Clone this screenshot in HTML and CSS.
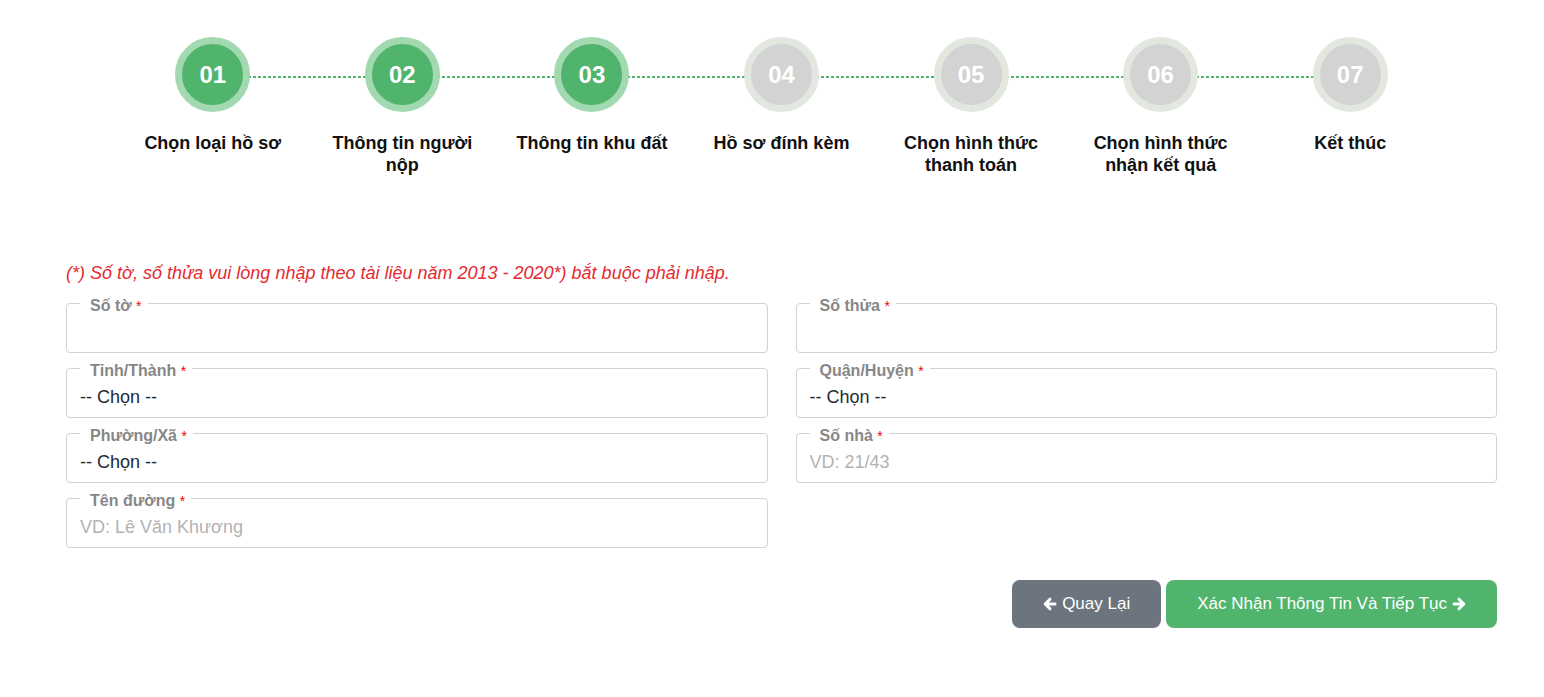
FILE: index.html
```html
<!DOCTYPE html>
<html lang="vi">
<head>
<meta charset="utf-8">
<title>Thông tin khu đất</title>
<link rel="stylesheet" href="styles.css">
</head>
<body>
<div class="page">
  <ol class="steps">
    <li class="step done"><span class="circle">01</span><span class="label">Chọn loại hồ sơ</span></li>
    <li class="step done"><span class="circle">02</span><span class="label">Thông tin người nộp</span></li>
    <li class="step done"><span class="circle">03</span><span class="label">Thông tin khu đất</span></li>
    <li class="step"><span class="circle">04</span><span class="label">Hồ sơ đính kèm</span></li>
    <li class="step"><span class="circle">05</span><span class="label">Chọn hình thức thanh toán</span></li>
    <li class="step"><span class="circle">06</span><span class="label">Chọn hình thức nhận kết quả</span></li>
    <li class="step"><span class="circle">07</span><span class="label">Kết thúc</span></li>
  </ol>

  <p class="note">(*) Số tờ, số thửa vui lòng nhập theo tài liệu năm 2013 - 2020*) bắt buộc phải nhập.</p>

  <form class="form">
    <fieldset class="field">
      <legend>Số tờ <span class="req">*</span></legend>
      <input class="control" type="text">
    </fieldset>
    <fieldset class="field">
      <legend>Số thửa <span class="req">*</span></legend>
      <input class="control" type="text">
    </fieldset>
    <fieldset class="field">
      <legend>Tỉnh/Thành <span class="req">*</span></legend>
      <select class="control"><option>-- Chọn --</option></select>
    </fieldset>
    <fieldset class="field">
      <legend>Quận/Huyện <span class="req">*</span></legend>
      <select class="control"><option>-- Chọn --</option></select>
    </fieldset>
    <fieldset class="field">
      <legend>Phường/Xã <span class="req">*</span></legend>
      <select class="control"><option>-- Chọn --</option></select>
    </fieldset>
    <fieldset class="field">
      <legend>Số nhà <span class="req">*</span></legend>
      <input class="control" type="text" placeholder="VD: 21/43">
    </fieldset>
    <fieldset class="field">
      <legend>Tên đường <span class="req">*</span></legend>
      <input class="control" type="text" placeholder="VD: Lê Văn Khương">
    </fieldset>
  </form>

  <div class="actions">
    <button class="btn btn-back" type="button">
      <svg class="ico" viewBox="0 0 14 14" aria-hidden="true"><path d="M7 2.2 L2.2 7 L7 11.8 M2.8 7 H12"/></svg>Quay Lại
    </button>
    <button class="btn btn-next" type="button">
      Xác Nhận Thông Tin Và Tiếp Tục<svg class="ico" viewBox="0 0 14 14" aria-hidden="true"><path d="M7 2.2 L11.8 7 L7 11.8 M11.2 7 H2"/></svg>
    </button>
  </div>
</div>
</body>
</html>
```

FILE: styles.css
```css
* { box-sizing: border-box; }

html, body {
  margin: 0;
  background: #fff;
  font-family: "Liberation Sans", Arial, sans-serif;
}

.page {
  width: 1431px;
  margin-left: 66px;
  padding-top: 37px;
}

/* Steps */
.steps {
  list-style: none;
  margin: 0 52px;
  padding: 0;
  display: grid;
  grid-template-columns: repeat(7, 1fr);
}

.step {
  position: relative;
  display: flex;
  flex-direction: column;
  align-items: center;
  padding: 0 15px;
}

.step:not(:last-child)::after {
  content: "";
  position: absolute;
  top: 39px;
  left: 50%;
  width: 100%;
  height: 2px;
  background: repeating-linear-gradient(to right, #51b46d 0 3px, transparent 3px 5px);
  z-index: 0;
}

.circle {
  position: relative;
  z-index: 1;
  width: 75px;
  height: 75px;
  border-radius: 50%;
  border: 7px solid #e2e8e0;
  background: #d3d3d3;
  color: #fff;
  font-weight: bold;
  font-size: 24px;
  display: flex;
  align-items: center;
  justify-content: center;
}

.step.done .circle {
  border-color: #a2d9b0;
  background: #51b46d;
}

.label {
  margin-top: 20px;
  font-size: 18px;
  line-height: 22px;
  font-weight: bold;
  color: #111;
  text-align: center;
}

/* Note */
.note {
  margin: 87px 0 8px;
  font-size: 18px;
  line-height: 20px;
  font-style: italic;
  color: #e42a2e;
}

/* Form */
.form {
  display: grid;
  grid-template-columns: 1fr 1fr;
  column-gap: 28px;
  row-gap: 3px;
}

.field {
  margin: 0;
  min-width: 0;
  padding: 0 13px 3px;
  border: 1px solid #cfd3d9;
  border-radius: 4px;
}

.field legend {
  padding: 6px 6px 0 10px;
  font-size: 16px;
  line-height: 18px;
  height: 24px;
  font-weight: bold;
  color: #878787;
}

.req {
  color: #f20000;
  font-size: 14px;
  line-height: 1;
  font-weight: normal;
}

.control {
  display: block;
  width: 100%;
  height: 34px;
  margin: 0;
  padding: 0;
  border: 0;
  outline: none;
  background: transparent;
  font-family: "Liberation Sans", Arial, sans-serif;
  font-size: 18px;
  color: #1f2a38;
  -webkit-appearance: none;
  appearance: none;
}

.control::placeholder {
  color: #b3b3b3;
}

/* Actions */
.actions {
  margin-top: 32px;
  display: flex;
  justify-content: flex-end;
  gap: 5px;
}

.btn {
  height: 48px;
  padding: 0 31px;
  border: 0;
  border-radius: 8px;
  color: #fff;
  font-family: "Liberation Sans", Arial, sans-serif;
  font-size: 17px;
  display: inline-flex;
  align-items: center;
  gap: 5px;
  cursor: pointer;
}

.btn-back { background: #6c757d; }
.btn-next { background: #51b46d; }

.ico {
  width: 14px;
  height: 14px;
  fill: none;
  stroke: #fff;
  stroke-width: 3;
  stroke-linecap: round;
  stroke-linejoin: round;
}
```
